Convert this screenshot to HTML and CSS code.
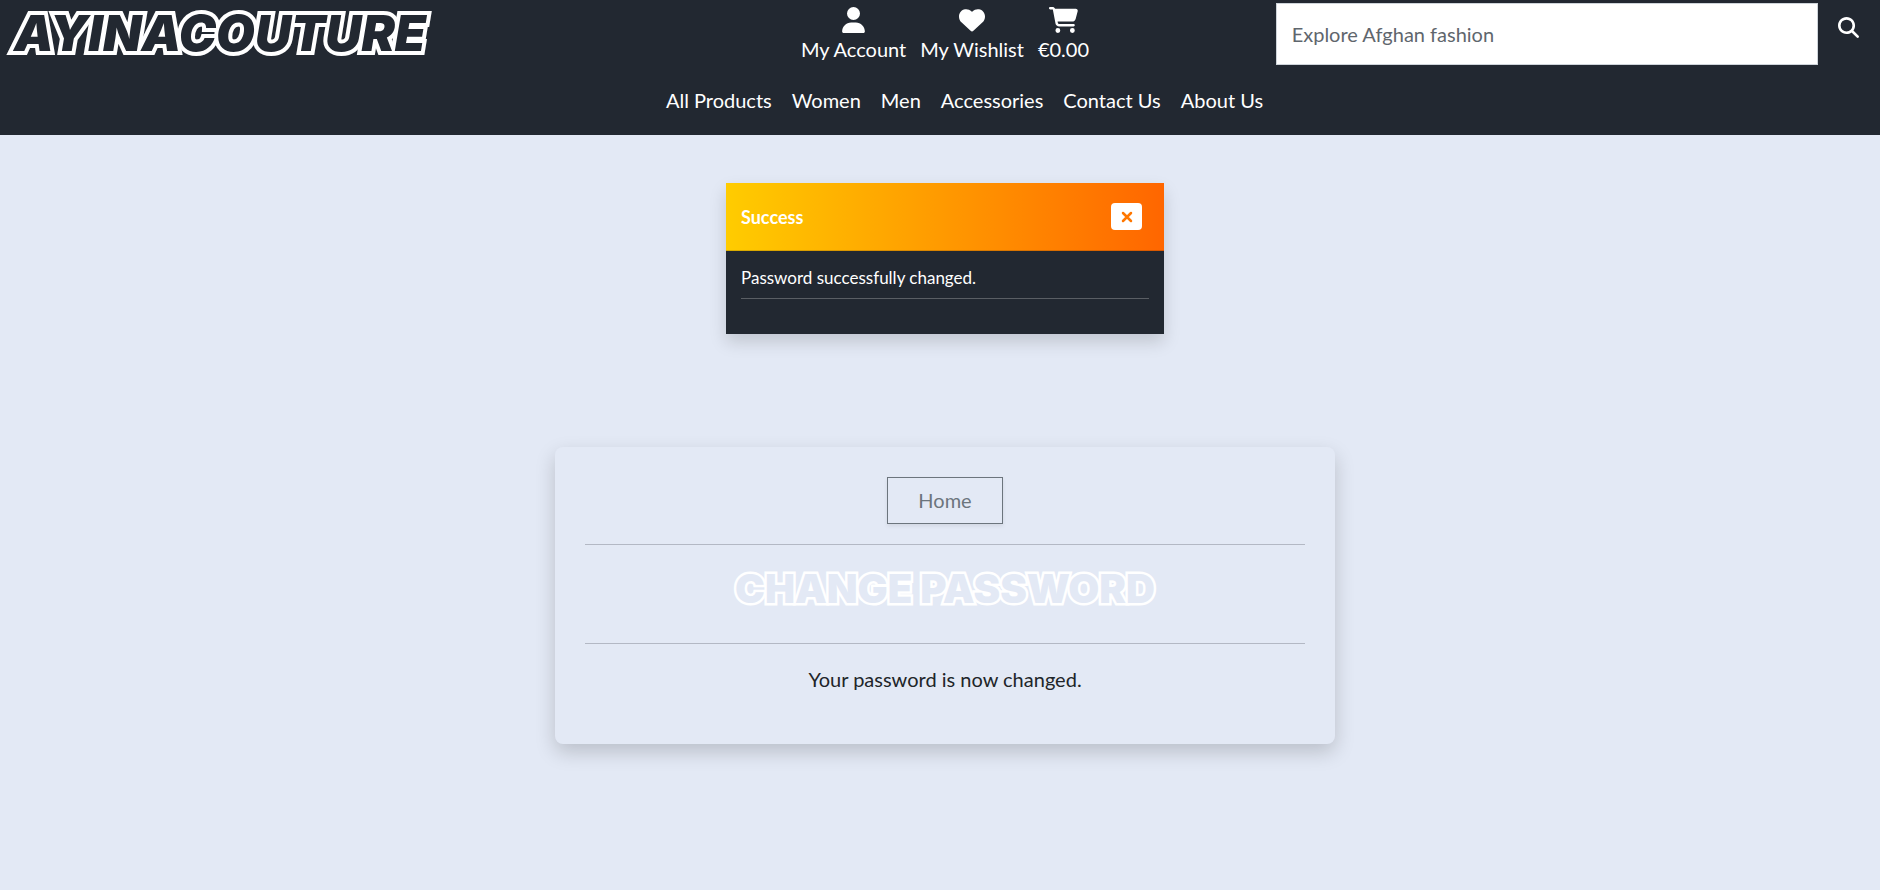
FILE: index.html
```html
<!DOCTYPE html>
<html lang="en">
<head>
<meta charset="utf-8">
<meta name="viewport" content="width=device-width, initial-scale=1">
<title>Ayina Couture</title>
<link rel="stylesheet" href="styles.css">
</head>
<body>
<header class="site-header">
  <div class="header-top">
    <a class="logo" href="#">AYINACOUTURE</a>
    <ul class="account-links">
      <li><a href="#">
        <svg class="icon icon-user" viewBox="0 0 448 512" aria-hidden="true"><path d="M224 256A128 128 0 1 0 224 0a128 128 0 1 0 0 256zm-45.700 48C79.800 304 0 383.800 0 482.300C0 498.700 13.300 512 29.700 512H418.300c16.400 0 29.700-13.300 29.700-29.700C448 383.800 368.200 304 269.700 304H178.300z"/></svg>
        <span>My Account</span></a></li>
      <li><a href="#">
        <svg class="icon" viewBox="0 0 512 512" aria-hidden="true"><path d="M47.600 300.400L228.300 469.100c7.500 7 17.400 10.900 27.700 10.900s20.200-3.900 27.700-10.900L464.400 300.400c30.400-28.300 47.600-68 47.600-109.500v-5.800c0-69.900-50.500-129.500-119.400-141C347 36.500 300.600 51.400 268 84L256 96 244 84c-32.600-32.600-79-47.500-124.600-39.900C50.500 55.600 0 115.200 0 185.100v5.800c0 41.500 17.200 81.200 47.600 109.500z"/></svg>
        <span>My Wishlist</span></a></li>
      <li><a href="#">
        <svg class="icon icon-cart" viewBox="0 0 576 512" aria-hidden="true"><path d="M0 24C0 10.700 10.700 0 24 0H69.500c22 0 41.500 12.800 50.600 32h411c26.300 0 45.500 25 38.600 50.400l-41 152.300c-8.500 31.400-37 53.300-69.500 53.300H170.700l5.400 28.500c2.200 11.300 12.100 19.500 23.600 19.500H488c13.300 0 24 10.700 24 24s-10.700 24-24 24H199.700c-34.600 0-64.300-24.600-70.700-58.500L77.400 54.500c-.7-3.800-4-6.500-7.900-6.500H24C10.700 48 0 37.300 0 24zM128 464a48 48 0 1 1 96 0 48 48 0 1 1-96 0zm336-48a48 48 0 1 1 0 96 48 48 0 1 1 0-96z"/></svg>
        <span>€0.00</span></a></li>
    </ul>
    <form class="search">
      <input class="search-input" type="search" aria-label="Search" placeholder="Explore Afghan fashion">
      <button class="search-button" type="button" aria-label="Search">
        <svg class="icon-search" viewBox="0 0 512 512" aria-hidden="true"><path d="M416 208c0 45.900-14.900 88.300-40 122.700L502.600 457.400c12.500 12.500 12.500 32.800 0 45.300s-32.800 12.500-45.300 0L330.700 376c-34.400 25.200-76.800 40-122.700 40C93.100 416 0 322.900 0 208S93.100 0 208 0S416 93.100 416 208zM208 352a144 144 0 1 0 0-288 144 144 0 1 0 0 288z"/></svg>
      </button>
    </form>
  </div>
  <nav class="main-nav" aria-label="Main">
    <a href="#">All Products</a>
    <a href="#">Women</a>
    <a href="#">Men</a>
    <a href="#">Accessories</a>
    <a href="#">Contact Us</a>
    <a href="#">About Us</a>
  </nav>
</header>
<main class="content">
  <section class="toast" role="status">
    <div class="toast-header">
      <strong>Success</strong>
      <button class="toast-close" type="button" aria-label="Close">
        <svg viewBox="0 0 12 12" aria-hidden="true"><path d="M2 2L10 10M10 2L2 10"/></svg>
      </button>
    </div>
    <div class="toast-body">
      <p>Password successfully changed.</p>
    </div>
  </section>
  <section class="card">
    <a class="home-button" href="#">Home</a>
    <hr>
    <h1 class="card-title">CHANGE PASSWORD</h1>
    <hr>
    <p class="card-text">Your password is now changed.</p>
  </section>
</main>
</body>
</html>
```
FILE: styles.css
```css
* {
  box-sizing: border-box;
}

body {
  margin: 0;
  background: #e3e9f5;
  color: #212529;
  font-family: Lato, "Liberation Sans", sans-serif;
  font-size: 20px;
  line-height: 30px;
}

a {
  color: inherit;
  text-decoration: none;
}

.site-header {
  padding-bottom: 20px;
  background: #222831;
  color: #fff;
}

.header-top {
  display: grid;
  grid-template-columns: repeat(3, 1fr);
  align-items: start;
  padding: 3px 0 0 10px;
}

.logo,
.card-title {
  font-family: Inter, "Liberation Sans", sans-serif;
  font-weight: 900;
  -webkit-text-stroke: 8px #fff;
  paint-order: stroke fill;
  stroke-linejoin: round;
  white-space: nowrap;
}

.logo {
  padding-left: 4px;
  color: #222831;
  font-size: 50px;
  font-style: italic;
  line-height: 60px;
}

.account-links {
  display: flex;
  justify-content: center;
  gap: 14px;
  margin: 0;
  padding: 4px 0 0;
  list-style: none;
}

.account-links a {
  display: flex;
  flex-direction: column;
  align-items: center;
}

.icon {
  width: 26px;
  height: 26px;
  margin-bottom: 1px;
  fill: #fff;
}

.icon-user {
  width: 23px;
}

.icon-cart {
  width: 29px;
}

.search {
  display: flex;
  align-items: flex-start;
  padding-left: 19px;
}

.search-input {
  flex: 1;
  min-width: 0;
  height: 62px;
  padding: 0 15px;
  border: 1px solid #ced4da;
  border-radius: 0;
  background: #fff;
  font: inherit;
}

.search-input::placeholder {
  color: #5f666d;
  opacity: 1;
}

.search-button {
  width: 62px;
  padding: 14px 20px;
  border: 0;
  background: none;
}

.icon-search {
  display: block;
  width: 21px;
  height: 21px;
  fill: #fff;
}

.main-nav {
  display: flex;
  justify-content: center;
  gap: 20px;
  padding: 20px 0 0 49px;
}

.content {
  display: flex;
  flex-direction: column;
  align-items: center;
  gap: 113px;
  padding: 48px 0 48px 10px;
}

.toast {
  width: 438px;
  max-width: 100%;
  background: #222831;
  color: #fff;
  font-size: 17px;
  line-height: 26px;
  box-shadow: 0 8px 16px rgba(0, 0, 0, 0.15);
}

.toast-header {
  display: flex;
  align-items: center;
  justify-content: space-between;
  height: 68px;
  padding: 0 22px 0 15px;
  border-bottom: 1px solid rgba(0, 0, 0, 0.15);
  background: linear-gradient(to right, #fc0, #f60);
  font-size: 18px;
}

.toast-close {
  display: grid;
  place-items: center;
  width: 31px;
  height: 27px;
  padding: 0;
  border: 0;
  border-radius: 4px;
  background: #fff;
}

.toast-close svg {
  width: 12px;
  height: 12px;
  fill: none;
  stroke: #f70;
  stroke-width: 2.500;
  stroke-linecap: round;
}

.toast-body {
  padding: 14px 15px 35px;
}

.toast-body p {
  margin: 0;
  padding-bottom: 7px;
  border-bottom: 1px solid #5a5e64;
}

.card {
  display: flex;
  flex-direction: column;
  align-items: center;
  width: 780px;
  max-width: 100%;
  padding: 30px 30px 50px;
  border-radius: 8px;
  background: #e3e9f5;
  box-shadow: 0 8px 20px rgba(0, 0, 0, 0.18);
}

.home-button {
  padding: 7px 30px 8px;
  border: 1px solid #6c757d;
  color: #6c757d;
  box-shadow: 0 2px 4px rgba(0, 0, 0, 0.08);
}

.card hr {
  width: 100%;
  margin: 20px 0;
  border: 0;
  border-top: 1px solid #b3b8c4;
}

.card-title {
  margin: 0 0 10px;
  color: #e3e9f5;
  font-size: 40px;
  line-height: 48px;
  -webkit-text-stroke-width: 5px;
}

.card-text {
  margin: 0;
}
```
